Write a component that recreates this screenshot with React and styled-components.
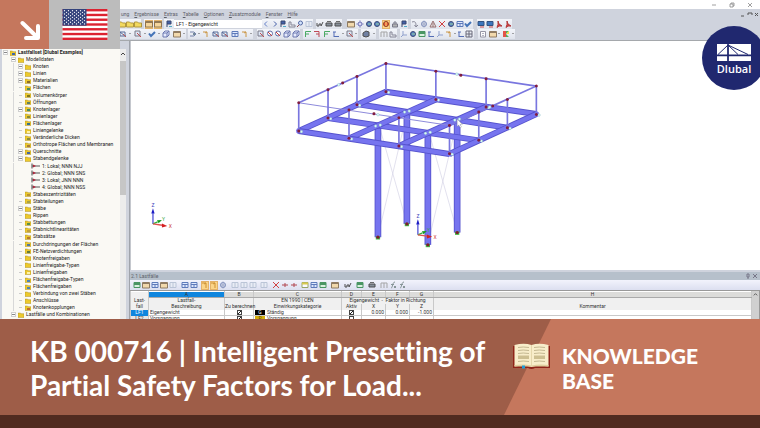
import React from "react";
import styled, { createGlobalStyle, css } from "styled-components";

const color = {
  clay: "#c5775d",
  brick: "#9e5d48",
  bark: "#512b20",
  chrome: "#cfd3dd",
  navy: "#20286f",
  beam: "#7674ef",
  beamEdge: "#5552cc",
};

const Global = createGlobalStyle`
  *, *::before, *::after { box-sizing: border-box; }
  body { margin: 0; background: ${color.bark}; }
  button, input, select { font: inherit; color: inherit; margin: 0; padding: 0; border: 0; background: none; }
`;

const Page = styled.div`
  display: flex;
  flex-direction: column;
  height: 100vh;
  overflow: hidden;
  font-family: Roboto, "Open Sans", sans-serif;
`;

const Screen = styled.main`
  position: relative;
  flex: 1;
  min-height: 0;
  display: flex;
  flex-direction: column;
  overflow: hidden;
  background: #fff;
  font-size: 5px;
  line-height: 7px;
  color: #333;
`;

/* ---------- overlays ---------- */

const Corner = styled.div`
  position: absolute;
  top: 0;
  left: 0;
  display: flex;
  height: 49px;
`;

const ArrowTile = styled.div`
  display: flex;
  align-items: flex-end;
  justify-content: flex-end;
  width: 49px;
  padding: 7px;
  background: ${color.clay};
`;

const FlagTile = styled.div`
  display: flex;
  align-items: center;
  justify-content: center;
  width: 71px;
  background: #bcbcbc;
`;

const Badge = styled.div`
  position: absolute;
  top: 26px;
  right: -6px;
  display: flex;
  flex-direction: column;
  align-items: center;
  width: 64px;
  height: 64px;
  padding-top: 18px;
  border-radius: 50%;
  background: ${color.navy};
  color: #fff;
  font-family: "Open Sans", "Noto Sans", sans-serif;
  font-size: 11px;
  line-height: 15px;
  font-weight: 600;
`;

/* ---------- window chrome ---------- */

const TitleBar = styled.div`
  display: flex;
  justify-content: flex-end;
  align-items: center;
  gap: 12px;
  height: 9px;
  padding-right: 7px;
`;

const WindowButton = styled.button`
  display: flex;
  width: 6px;
  height: 6px;
`;

const Chrome = styled.div`
  padding-left: 118px;
  background: ${color.chrome};
  border-bottom: 1px solid #a5a8ac;
`;

const MenuBar = styled.nav`
  display: flex;
  align-items: center;
  gap: 5px;
  height: 10px;
  padding-left: 3px;
  color: #5d6068;
`;

const MenuItem = styled.button`
  line-height: 10px;
  &::first-letter { text-decoration: ${(p) => (p.$plain ? "none" : "underline")}; }
`;

const MenuControls = styled.div`
  display: flex;
  gap: 1px;
  margin-left: auto;
`;

const ToolRow = styled.div`
  display: flex;
  height: 10px;
  margin-bottom: ${(p) => (p.$last ? 1 : 0)}px;
`;

const ToolGroup = styled.div`
  display: flex;
  align-items: center;
  justify-content: space-around;
  flex: none;
  width: ${(p) => p.$width}px;
  margin-right: ${(p) => p.$gap || 0}px;
  background: linear-gradient(#f3f5fa, #dfe3ec);
`;

const ToolButton = styled.button`
  display: flex;
  align-items: center;
  justify-content: center;
  width: 8px;
  height: 9px;
  & > svg { opacity: 0.85; }
  ${(p) => p.$active && css`background: #fbd588; outline: 1px solid #e3b26a; outline-offset: -1px;`}
`;

const Drop = styled.i`
  border: 1px solid transparent;
  border-top-color: #555;
`;

const CaseSelect = styled.select`
  appearance: none;
  flex: none;
  width: 88px;
  height: 8px;
  margin-top: 1px;
  padding-left: 2px;
  background: #fff;
  color: #222;
  line-height: 8px;
`;

const Body = styled.div`
  flex: 1;
  min-height: 0;
  display: flex;
`;

/* ---------- navigator ---------- */

const Navigator = styled.aside`
  display: flex;
  flex: none;
  width: 130px;
  padding-top: 8px;
  background: ${color.chrome};
  border-right: 1px solid #9fa3ab;
`;

const Tree = styled.ul`
  flex: 1;
  display: flex;
  flex-direction: column;
  justify-content: space-between;
  margin: 0 0 0 2px;
  padding: 0;
  list-style: none;
  background: #faf9f4;
  color: #1c1c1c;
`;

const TreeRow = styled.li`
  display: flex;
  align-items: center;
  gap: 2px;
  height: 7px;
  white-space: nowrap;
  padding-left: ${(p) => [1, 9, 16, 29][p.$level]}px;
  font-weight: ${(p) => (p.$level === 0 ? 700 : 400)};
  background: ${(p) =>
    p.$level > 1 ? "linear-gradient(#d8d8d8, #d8d8d8) 11px 0 / 1px 100% no-repeat" : "none"};
`;

const Toggle = styled.span`
  flex: none;
  width: 5px;
  height: 5px;
  border: 1px solid ${(p) => (p.$shown ? "#d0d0d0" : "transparent")};
  background: ${(p) =>
    p.$shown
      ? "linear-gradient(#888, #888) center / 3px 1px no-repeat #fff"
      : "linear-gradient(#ccc, #ccc) center / 100% 1px no-repeat"};
`;

const TreeScroll = styled.div`
  width: 6px;
  margin-right: 3px;
  padding-top: 2px;
  background: #ececec;
`;

const Thumb = styled.div`
  height: 50%;
  margin-top: 2px;
  background: #c6c6c6;
`;

/* ---------- work area ---------- */

const Work = styled.div`
  flex: 1;
  min-width: 0;
  display: flex;
  flex-direction: column;
`;

const Viewport = styled.div`
  flex: 1;
  min-height: 0;
  display: flex;
  border-left: 1px solid #c5c8ce;
  & > svg { width: 100%; height: 100%; }
`;

const Panel = styled.section`
  flex: none;
  height: 49px;
  overflow: hidden;
  border-top: 2px solid ${color.chrome};
`;

const PanelTitle = styled.header`
  display: flex;
  align-items: center;
  justify-content: space-between;
  height: 8px;
  padding: 0 2px 0 1px;
  background: #b6c0cb;
  color: #5c626a;
`;

const PanelTools = styled.div`
  display: flex;
  align-items: center;
  height: 10px;
  padding-left: 2px;
  background: linear-gradient(#f2f3fc, #dcdff0);
  & > ${ToolGroup} { background: none; }
`;

const GridWrap = styled.div`
  display: flex;
  border-top: 1px solid #999;
  line-height: 5px;
`;

const Grid = styled.table`
  flex: 1;
  width: 0;
  table-layout: fixed;
  border-collapse: collapse;
  background: #fff;
  th, td {
    height: 6px;
    padding: 0;
    border: 1px solid #c9c9c9;
    white-space: nowrap;
    font-weight: 400;
    text-align: center;
  }
  th { background: #f0f0f0; border-top-color: transparent; border-bottom-color: transparent; }
`;

const Letter = styled.th`
  && {
    background: ${(p) => (p.$on ? "#0f86de" : "#dcdcda")};
    border-bottom: 1px solid #aaa;
  }
`;

const Cell = styled.td`
  && {
    padding: 0 1px;
    text-align: ${(p) => p.$align || "left"};
  }
`;

const RowHead = styled.th`
  && {
    background: ${(p) => (p.$on ? "#0f86de" : "#e6e6e6")};
    color: ${(p) => (p.$on ? "#fff" : "#333")};
  }
`;

const Swatch = styled.span`
  display: inline-block;
  width: 10px;
  height: 5px;
  margin-right: 2px;
  background: ${(p) => p.$fill};
  color: ${(p) => p.$ink};
  text-align: center;
  vertical-align: top;
`;

const Check = styled.input`
  appearance: none;
  display: block;
  width: 5px;
  height: 5px;
  margin: 0 auto;
  border: 1px solid #444;
  background: #fff;
  &:checked { background: linear-gradient(135deg, #fff 40%, #222 40% 65%, #fff 65%); }
`;

const GridScroll = styled.div`
  width: 8px;
  padding: 1px;
  background: #d0d0d0;
  border-right: 1px solid #999;
`;

/* ---------- banner ---------- */

const Banner = styled.footer`
  flex: none;
  display: flex;
  min-height: 109px;
  border-bottom: 13px solid ${color.bark};
  background: ${color.brick};
  color: #fff;
  font-family: Lato, "Open Sans", sans-serif;
`;

const Title = styled.h1`
  flex: 1;
  margin: 0;
  padding: 15px 0 0 30px;
  font-size: 28px;
  line-height: 34px;
  font-weight: 700;
  font-variant-ligatures: none;
  white-space: nowrap;
`;

const Category = styled.div`
  flex: none;
  display: flex;
  align-items: flex-start;
  gap: 12px;
  width: 256px;
  padding: 24px 0 0 9px;
  position: relative;
  isolation: isolate;
  &::before {
    content: "";
    position: absolute;
    z-index: -1;
    inset: 0;
    background: ${color.clay};
    clip-path: polygon(47px 0, 100% 0, 100% 100%, 0 100%);
  }
`;

const CategoryName = styled.div`
  font-size: 21px;
  line-height: 25px;
  font-weight: 900;
`;

/* ---------- icons ---------- */

const glyphs = {
  prev: <path d="M5 1.5 2.5 4 5 6.5" stroke="#4b6cc0" />,
  next: <path d="M3 1.5 5.5 4 3 6.5" stroke="#27459c" />,
  folder: <path d="M.5 2h3l1 1h3v4h-7z" fill="#f4d646" stroke="#a88a20" />,
  doc: <><path d="M1.5 1.5h5v5.500h-5z" fill="#fff" stroke="#889" /><path d="M3 3.500h2M3 5.500h2" stroke="#aab" /></>,
  window: <><path d="M.5 1.500h7v5.500h-7z" fill="#f4d6a0" stroke="#80684a" /><path d="M.5 2.500h7" stroke="#80684a" /></>,
  cube: <><path d="M1 3 3 1h4v4L5 7H1zM1 3h4v4M5 3l2-2" fill="#e5ebff" stroke="#5665a5" /></>,
  cubeDark: <path d="M1 3 4 1l3 1v4L4 7 1 6z" fill="#5d6f95" stroke="#333" />,
  flag: <><path d="M2 7V1h4v3H2" fill="#26499b" stroke="#1b2b58" /><path d="M4 6.500h3" stroke="#38a0c0" /></>,
  steps: <path d="M1 7V2h2v3h4v2z" fill="#e8eaee" stroke="#778" />,
  lens: <><circle cx="4.500" cy="3" r="2" fill="#cfe3ff" stroke="#384f93" /><path d="M3 5 1 7" stroke="#802d2d" /></>,
  zoomRed: <><circle cx="4" cy="3.500" r="2.500" fill="#fff" stroke="#47599b" /><path d="M2 2l4 4" stroke="#c02020" /></>,
  glasses: <><path d="M1 3v3h2V4h2v2l2-4" stroke="#333" /></>,
  print: <><path d="M1 3h6v3H1z" fill="#77808b" stroke="#333" /><path d="M2 1.500h4" stroke="#555" /></>,
  gear: <><circle cx="4" cy="4" r="2" fill="#d7d8f6" stroke="#5457a8" /><path d="M4 .5v1M4 6.500v1M.5 4h1M6.500 4h1" stroke="#5457a8" /></>,
  tableBlue: <><path d="M1 1.500h6v5H1z" fill="#dfe9ff" stroke="#4667b0" /><path d="M1 3.500h6M4 3.500v3" stroke="#4667b0" /></>,
  tableGreen: <><path d="M1 1.500h6v5H1z" fill="#d7f2dc" stroke="#2f874b" /><path d="M1 3h6" stroke="#2f874b" strokeWidth="2" /></>,
  tableYellow: <><path d="M1 1.500h6v5H1z" fill="#fff" stroke="#8a9a50" /><path d="M1 2.500h6" stroke="#d7c432" strokeWidth="2" /></>,
  ball: <><circle cx="4" cy="4" r="2.500" fill="#3d6dbd" stroke="#20305f" /><path d="M3 4h3" stroke="#8fd08d" /></>,
  fire: <><circle cx="4" cy="4" r="2.500" fill="#e84024" stroke="#7b2615" /><path d="M4 2v4" stroke="#ffe27a" /></>,
  lock: <><path d="M1.500 4h5v3h-5z" fill="#aaa" stroke="#667" /><path d="M3 4V2h2v2" stroke="#667" /></>,
  curve: <path d="M1 2c3-1 4 0 4 4M3.500 5 5 7l2-2" stroke="#778" />,
  target: <><circle cx="4" cy="4" r="2.500" stroke="#5d71aa" /><path d="M4 .5v7M1 4h6" stroke="#909cc0" /></>,
  tri: <path d="M4 1 1 7h6zM4 3v4" stroke="#8a5a5a" fill="#eee" />,
  cross: <path d="m1 1 6 6M7 1 1 7" stroke="#cc2626" />,
  check: <path d="M1 3.500 3 6l4-4" stroke="#285fae" strokeWidth="2" />,
  monitor: <><path d="M1 1.500h6v4H1z" fill="#1f62b4" stroke="#14376c" /><path d="M3 7h4" stroke="#c33" /></>,
  pdf: <path d="m3 1 1 3 3 2-3 0-2 1.500 1-3z" fill="#d42828" stroke="#a81a1a" />,
  frame: <path d="M1 7V2h6v5M4 2v5" stroke="#999" />,
  axesG: <path d="M1.500 7V1.500H7M2 4h3" stroke="#2f9e4c" />,
  axesR: <path d="M1 1.500h5V7M3 4h3" stroke="#b72e3b" />,
  axisT: <path d="M2 7V2M2 6.500h5M1 2h3" stroke="#3c58ac" />,
  pick: <><path d="M1 1h5v5H1z" fill="#dbe5f5" stroke="#667" /><path d="m3 3 4 4" stroke="#b33" /></>,
  truss: <><path d="M1 2h5M1 6h6M1 2v4M1 2l5 4M6 2v4" stroke="#3e5588" /><path d="M4 4l3 3" stroke="#b23d3d" /></>,
  node: <><path d="M1 2h4l2 2-2 2H1" stroke="#6273a0" /><circle cx="5" cy="4" r="1" fill="#356" /></>,
  hook: <path d="M1 2h4v5M3 3l2-1" stroke="#c58727" />,
  prismatic: <><path d="M1 1h6L4 4l3 3H1z" fill="#37a447" /><path d="M1 1h3v6H1z" fill="#e33a2c" /><path d="M4 4l3-3v3z" fill="#f6dd31" /></>,
  coord: <path d="M3 1v4L1 7M3 5h4" stroke="#8295c7" />,
  addRed: <path d="M1 4h6M4 2v4" stroke="#a92b35" />,
  fx: <path d="M2 7c2 0 1-6 4-6M2 3.500h3M5 5l2 2M7 5 5 7" stroke="#788" />,
  faded: <path d="M1 1.500h6v5H1zM4 2v4" stroke="#b3bed2" fill="#e9edf5" />,
  grid: <path d="M1 1h6v6H1zM1 4h6M4 1v6" stroke="#556" />,
};

const Glyph = ({ name }) => (
  <svg width="8" height="8" viewBox="0 0 8 8" fill="none" aria-hidden="true">{glyphs[name]}</svg>
);

/* "name" is a button, "name*" a pressed one, "-" a drop-down mark */
const Tools = ({ width, gap, items }) => (
  <ToolGroup $width={width} $gap={gap}>
    {items.split(" ").map((item, i) => {
      if (item === "-") return <Drop key={i} />;
      const name = item.replace("*", "");
      return (
        <ToolButton key={i} type="button" aria-label={name} $active={item.endsWith("*")}>
          <Glyph name={name} />
        </ToolButton>
      );
    })}
  </ToolGroup>
);

const ArrowIcon = () => (
  <svg width="22" height="22" viewBox="0 0 22 22" fill="none" aria-hidden="true">
    <path d="M2.500 3 17 17M18 6v12H6" stroke="#fff" strokeWidth="4" strokeLinecap="round" strokeLinejoin="round" />
  </svg>
);

const Flag = () => (
  <svg width="46" height="31" viewBox="0 0 45 31" role="img" aria-label="English">
    <path d="M0 0h45v31H0z" fill="#fff" />
    {[0, 2, 4, 6, 8, 10, 12].map((n) => (
      <rect key={n} y={(n * 31) / 13} width="45" height={31 / 13} fill="#dc2331" />
    ))}
    <path d="M0 0h24v16.700H0z" fill="#34437c" />
    {Array.from({ length: 9 }, (_, r) =>
      Array.from({ length: r % 2 ? 5 : 6 }, (_, c) => (
        <circle key={`${r}-${c}`} cx={2 + c * 4 + (r % 2) * 2} cy={1.7 + r * 1.65} r=".65" fill="#fff" />
      ))
    )}
  </svg>
);

const BridgeLogo = () => (
  <svg width="34" height="17" viewBox="0 0 34 17" aria-hidden="true">
    <path d="M0 0h34v10.500H0zM0 12.200h34V17H0z" fill="#fff" />
    <path d="M11 1 1 10.500M11 1v15.500M11 1l10 9.500M11 1l20 9.500" fill="none" stroke={color.navy} strokeWidth="1" />
    <path d="M11 0v17" stroke={color.navy} strokeWidth="1.600" />
  </svg>
);

const Book = () => (
  <svg width="37" height="27" viewBox="0 0 37 27" aria-hidden="true">
    <path d="M0 3h37v22H22q-3.500 2-7 0H0z" fill="#8f2419" />
    <path d="M1.500 2Q11-.5 18.500 2 26-.5 35.500 2v21.500Q26 22 18.500 24 11 22 1.500 23.500z" fill="#f8edca" />
    <path d="M1.500 22Q11 21 18.500 22.500 26 21 35.500 22v1.500H1.500z" fill="#dfcf9f" />
    <path d="M18.500 2v21" stroke="#e5d7ac" />
    <path d="M5 4.500q5-1 11 0M5 7.500q5-1 11 0M5 10.500q5-1 11 0M5 18.500q5-1 11 0M21 4.500q5-1 11 0M21 7.500q5-1 11 0M21 10.500q5-1 11 0M21 18.500q5-1 11 0" fill="none" stroke="#c4b891" />
    <path d="M5 12.500h11V16H5zM21 12.500h11V16H21z" fill="#cdbf91" />
    <path d="M9 22.500h3v3H9z" fill="#1e9cd7" />
  </svg>
);

const TreeIcon = ({ kind, tint }) =>
  kind === "hinge" ? (
    <svg width="9" height="6" viewBox="0 0 9 6" aria-hidden="true">
      <path d="M1 .5v5" stroke="#444" /><path d="M1 3h8" stroke="#555" /><path d="M2 1.500 5 3 2 4.500z" fill="#b0283c" />
    </svg>
  ) : (
    <svg width="6" height="6" viewBox="0 0 6 6" aria-hidden="true">
      <path d="M0 1h2.500l.5.700h3V5.500H0z" fill="#ecc92d" stroke="#9c821e" strokeWidth=".4" />
      {tint && <path d="M2 3h3v2H2z" fill={tint} />}
    </svg>
  );

/* ---------- model ---------- */

const rails = [
  [54, 158, 316, 40], [316, 40, 768, 108], [768, 108, 507, 226],
];
const posts = [
  [54, 158], [142, 119], [229, 79], [316, 40], [466, 63], [617, 86],
  [768, 108], [681, 148], [595, 186], [507, 226], [355, 203], [205, 180],
];
const beams = [
  [316, 125, 768, 192], [229, 162, 681, 233], [142, 204, 595, 271],
  [54, 243, 316, 125], [205, 265, 466, 148], [355, 288, 617, 170],
  [54, 243, 507, 312], [507, 312, 768, 192],
];
const columns = [[379, 188, 522], [530, 211, 548], [292, 228, 562], [442, 250, 585]];
const midNodes = [[186, 99, -12, 5], [541, 75, -12, -3], [637, 168, -9, 3], [280, 191, 12, 3]];
const joints = [[292, 228], [379, 186], [442, 250], [530, 210]];

const Axes = ({ x, y }) => (
  <g transform={`translate(${x} ${y})`} fill="none" strokeWidth="4">
    <path d="M0 0v-32" stroke="#5555d8" />
    <path d="m0-47 5 16H-5z" fill="#1c1cc4" />
    <path d="m0 0 14-6" stroke="#35b23b" />
    <path d="m27-12-15 1 5 9z" fill="#159c22" />
    <path d="m0 0 28 4" stroke="#e05050" />
    <path d="m43 6-16-7v12z" fill="#d32020" />
    <g fontSize="15" textAnchor="middle">
      <text x="0" y="-52" fill="#4343bd">Z</text>
      <text x="32" y="-9" fill="#35a63f">Y</text>
      <text x="52" y="12" fill="#cc4040">X</text>
    </g>
  </g>
);

const Node = ({ x, y, dx = 8, dy = 2 }) => (
  <g>
    <circle cx={x + dx} cy={y + dy} r="4" fill="#d8fbf4" stroke="#75a7b9" />
    <circle cx={x} cy={y} r="4.500" fill="#811d3f" />
  </g>
);

const Model = () => (
  <svg viewBox="-450 -27 1890 687" role="img" aria-label="Platform structure model">
    <g stroke="#d3d1e6" strokeWidth="2">
      <path d="M296 228 379 520M379 190 292 560M446 250 530 545M530 213 442 583" />
    </g>
    {columns.map(([x, y1, y2]) => (
      <g key={x}>
        <path d={`M${x} ${y1}V${y2}`} stroke={color.beamEdge} strokeWidth="20" />
        <path d={`M${x} ${y1}V${y2}`} stroke={color.beam} strokeWidth="15" />
        <path d={`M${x} ${y2 - 3}v10`} stroke="#3fc044" strokeWidth="13" />
        <circle cx={x} cy={y2} r="5" fill="#7e1d30" />
      </g>
    ))}
    {beams.map(([x1, y1, x2, y2], i) => (
      <g key={i}>
        <path d={`M${x1} ${y1} ${x2} ${y2}`} stroke={color.beamEdge} strokeWidth="18" />
        <path d={`M${x1} ${y1} ${x2} ${y2}`} stroke={color.beam} strokeWidth="13" strokeLinecap="square" />
      </g>
    ))}
    {rails.map(([x1, y1, x2, y2], i) => (
      <path key={i} d={`M${x1} ${y1} ${x2} ${y2}`} stroke="#7976df" strokeWidth="5" />
    ))}
    <path d="M54 158 507 226" stroke="#8d8adb" strokeWidth="3" />
    {posts.map(([x, y]) => (
      <g key={x}>
        <path d={`M${x} ${y}v85`} stroke="#7976df" strokeWidth="5" />
        <Node x={x} y={y + 85} />
        <circle cx={x} cy={y} r="4.500" fill="#811d3f" />
      </g>
    ))}
    {midNodes.map(([x, y, dx, dy]) => <Node key={x} x={x} y={y} dx={dx} dy={dy} />)}
    {joints.map(([x, y]) => (
      <g key={x}>
        <circle cx={x - 7} cy={y} r="4" fill="#d8fbf4" stroke="#75a7b9" />
        <circle cx={x + 7} cy={y - 3} r="4" fill="#d8fbf4" stroke="#75a7b9" />
      </g>
    ))}
    <Axes x={412} y={555} />
    <Axes x={-384} y={522} />
    <path d="M530 207v22l5-4 4 8 4-2-4-8h7z" fill="#fff" stroke="#777" />
  </svg>
);

/* ---------- data ---------- */

const tree = [
  [0, "Lastfallset [Dlubal Examples]", 1, "#3f67a8"],
  [1, "Modelldaten", 1],
  [2, "Knoten", 1], [2, "Linien", 1], [2, "Materialien", 1, "#8b6d2c"],
  [2, "Flächen", 0, "#4c8b61"], [2, "Volumenkörper", 0, "#80781f"], [2, "Öffnungen", 0, "#5f7f62"],
  [2, "Knotenlager", 1, "#4c8b61"], [2, "Linienlager", 0, "#83883a"], [2, "Flächenlager", 0, "#37708b"],
  [2, "Liniengelenke", 0, "#fff2a8"], [2, "Veränderliche Dicken", 0, "#8b8b3c"],
  [2, "Orthotrope Flächen und Membranen", 0, "#a77b3c"], [2, "Querschnitte", 1, "#46679d"],
  [2, "Stabendgelenke", 1],
  [3, "1: Lokal; NNN NJJ"], [3, "2: Global; NNN SNS"], [3, "3: Lokal; JNN NNN"], [3, "4: Global; NNN NSS"],
  [2, "Stabexzentrizitäten", 0, "#b89230"], [2, "Stabteilungen", 0, "#a6a14a"], [2, "Stäbe", 1],
  [2, "Rippen", 0], [2, "Stabbettungen", 0, "#5b8f4b"], [2, "Stabnichtlinearitäten", 0, "#c1a03f"],
  [2, "Stabsätze", 0, "#b7792d"], [2, "Durchdringungen der Flächen", 0, "#54799a"],
  [2, "FE-Netzverdichtungen", 0, "#647b3c"], [2, "Knotenfreigaben", 0], [2, "Linienfreigabe-Typen", 0],
  [2, "Linienfreigaben", 0, "#fff2a8"], [2, "Flächenfreigabe-Typen", 0, "#4e83b4"],
  [2, "Flächenfreigaben", 0, "#4e83b4"], [2, "Verbindung von zwei Stäben", 0], [2, "Anschlüsse", 0],
  [2, "Knotenkopplungen", 0, "#bf6c2d"], [1, "Lastfälle und Kombinationen", 1],
];

const menus = ["Ergebnisse", "Extras", "Tabelle", "Optionen", "Zusatzmodule", "Fenster", "Hilfe"];
const columnWidths = [18, 76, 29, 88, 20, 24, 24, 24];
const cases = [
  { id: "LF1", name: "Eigengewicht", key: "G", fill: "#000", ink: "#fff", type: "Ständig", on: true, f: ["0.000", "0.000", "-1.000"] },
  { id: "LF2", name: "Vorspannung", key: "P", fill: "#d4ad0c", ink: "#5a4700", type: "Vorspannung", on: false, f: ["", "", ""] },
];

export default function App() {
  return (
    <Page>
      <Global />
      <Screen>
        <TitleBar>
          <WindowButton aria-label="Minimize"><svg viewBox="0 0 6 6"><path d="M1 3h4" stroke="#888" strokeWidth=".8" /></svg></WindowButton>
          <WindowButton aria-label="Restore"><svg viewBox="0 0 6 6" fill="none"><path d="M1 2h3v3H1zM2 2V1h3v3H4" stroke="#888" strokeWidth=".8" /></svg></WindowButton>
          <WindowButton aria-label="Close"><svg viewBox="0 0 6 6"><path d="m1 1 4 4M5 1 1 5" stroke="#888" strokeWidth=".8" /></svg></WindowButton>
        </TitleBar>
        <Chrome>
          <MenuBar>
            <MenuItem $plain>ung</MenuItem>
            {menus.map((m) => <MenuItem key={m}>{m}</MenuItem>)}
            <MenuControls>
              <WindowButton aria-label="Minimize view"><svg viewBox="0 0 6 6"><path d="M1 5h3" stroke="#555" /></svg></WindowButton>
              <WindowButton aria-label="Restore view"><svg viewBox="0 0 6 6" fill="none"><path d="M1 4V2h4v2" stroke="#555" /></svg></WindowButton>
              <WindowButton aria-label="Close view"><svg viewBox="0 0 6 6"><path d="m1 2 3 3M4 2 1 5" stroke="#555" /></svg></WindowButton>
            </MenuControls>
          </MenuBar>
          <ToolRow>
            <Tools width={23} gap={3} items="folder folder folder" />
            <Tools width={18} gap={2} items="window* window*" />
            <Tools width={10} items="flag" />
            <CaseSelect aria-label="Load case" defaultValue="LF1"><option value="LF1">LF1 - Eigengewicht</option></CaseSelect>
            <Tools width={51} gap={3} items="prev next flag steps lens faded" />
            <Tools width={26} gap={5} items="glasses print print" />
            <Tools width={61} gap={3} items="window gear ball ball fire* lock flag" />
            <Tools width={62} gap={4} items="curve target tri cross ball tableBlue check" />
            <Tools width={35} items="monitor monitor pdf pdf" />
          </ToolRow>
          <ToolRow $last>
            <Tools width={68} gap={2} items="truss - pick - check - cube window -" />
            <Tools width={65} gap={4} items="node - hook truss truss tableBlue hook -" />
            <Tools width={43} gap={3} items="pick zoomRed zoomRed cube cube" />
            <Tools width={55} gap={3} items="axesG axesR axesG axisT - pick -" />
            <Tools width={15} gap={3} items="cubeDark -" />
            <Tools width={18} gap={3} items="frame steps" />
            <Tools width={74} gap={4} items="coord ball tableGreen axisT coord hook - axisT grid" />
            <Tools width={37} items="doc window - prismatic -" />
          </ToolRow>
        </Chrome>
        <Body>
          <Navigator>
            <Tree>
              {tree.map(([level, label, toggle, tint]) => (
                <TreeRow key={label} $level={level}>
                  {level < 3 && <Toggle $shown={!!toggle} />}
                  <TreeIcon kind={level === 3 ? "hinge" : "folder"} tint={tint} />
                  {label}
                </TreeRow>
              ))}
            </Tree>
            <TreeScroll>
              <svg width="6" height="6" viewBox="0 0 6 6" fill="none"><path d="m1 4 2-2 2 2" stroke="#444" /></svg>
              <Thumb />
            </TreeScroll>
          </Navigator>
          <Work>
            <Viewport><Model /></Viewport>
            <Panel>
              <PanelTitle>
                2.1 Lastfälle
                <MenuControls>
                  <WindowButton aria-label="Pin"><svg viewBox="0 0 6 6"><path d="M2 1h2v3H2zM3 4v2" stroke="#778" fill="none" /></svg></WindowButton>
                  <WindowButton aria-label="Close panel"><svg viewBox="0 0 6 6"><path d="m1 1 4 4M5 1 1 5" stroke="#778" /></svg></WindowButton>
                </MenuControls>
              </PanelTitle>
              <PanelTools>
                <Tools width={45} gap={3} items="tableGreen window tableBlue window faded" />
                <Tools width={18} gap={2} items="tableBlue tableBlue" />
                <Tools width={27} gap={3} items="hook* hook* target" />
                <Tools width={27} gap={2} items="faded faded faded" />
                <Tools width={10} gap={3} items="faded" />
                <Tools width={26} gap={2} items="cross addRed addRed" />
                <Tools width={27} gap={3} items="tableYellow tableBlue tableGreen" />
                <Tools width={10} gap={3} items="window" />
                <Tools width={10} gap={2} items="glasses" />
                <Tools width={10} gap={2} items="tableGreen" />
                <Tools width={10} gap={3} items="print" />
                <Tools width={26} items="frame fx fx" />
              </PanelTools>
              <GridWrap>
                <Grid>
                  <colgroup>
                    {columnWidths.map((w, i) => <col key={i} width={w} />)}
                    <col />
                  </colgroup>
                  <thead>
                    <tr>
                      <th />
                      {"ABCDEFGH".split("").map((l) => <Letter key={l} $on={l === "A"}>{l}</Letter>)}
                    </tr>
                    <tr>
                      <th>Last-</th><th>Lastfall-</th><th /><th>EN 1990 | CEN</th>
                      <th colSpan={4}>Eigengewicht &nbsp;-&nbsp; Faktor in Richtung</th><th />
                    </tr>
                    <tr>
                      <th>fall</th><th>Beschreibung</th><th>Zu berechnen</th><th>Einwirkungskategorie</th>
                      <th>Aktiv</th><th>X</th><th>Y</th><th>Z</th><th>Kommentar</th>
                    </tr>
                  </thead>
                  <tbody>
                    {cases.map((c) => (
                      <tr key={c.id}>
                        <RowHead $on={c.on}>{c.id}</RowHead>
                        <Cell>{c.name}</Cell>
                        <Cell><Check type="checkbox" defaultChecked aria-label={`Calculate ${c.id}`} /></Cell>
                        <Cell><Swatch $fill={c.fill} $ink={c.ink}>{c.key}</Swatch>{c.type}</Cell>
                        <Cell><Check type="checkbox" defaultChecked={c.on} aria-label={`Self-weight ${c.id}`} /></Cell>
                        {c.f.map((v, i) => <Cell key={i} $align="right">{v}</Cell>)}
                        <Cell />
                      </tr>
                    ))}
                  </tbody>
                </Grid>
                <GridScroll>
                  <svg width="5" height="5" viewBox="0 0 6 6" fill="none"><path d="m1 4 2-2 2 2" stroke="#444" /></svg>
                </GridScroll>
              </GridWrap>
            </Panel>
          </Work>
        </Body>
        <Corner>
          <ArrowTile><ArrowIcon /></ArrowTile>
          <FlagTile><Flag /></FlagTile>
        </Corner>
        <Badge><BridgeLogo />Dlubal</Badge>
      </Screen>
      <Banner>
        <Title>KB 000716 | Intelligent Presetting of<br />Partial Safety Factors for Load...</Title>
        <Category>
          <Book />
          <CategoryName>KNOWLEDGE<br />BASE</CategoryName>
        </Category>
      </Banner>
    </Page>
  );
}
